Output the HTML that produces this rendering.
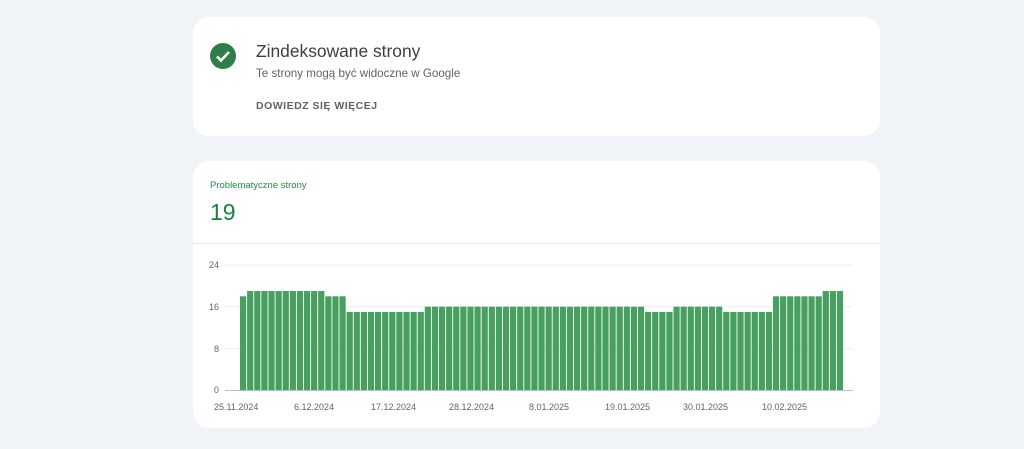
<!DOCTYPE html>
<html><head><style>
body{margin:0;width:1024px;height:449px;background:#f0f3f8;font-family:"Liberation Sans",Arial,sans-serif;position:relative;overflow:hidden}
.card{position:absolute;left:193px;width:687px;background:#fff;border-radius:16px}
</style></head><body>
<div class="card" style="top:17px;height:119px">
<svg style="position:absolute;left:17px;top:26px" width="26" height="26" viewBox="0 0 26 26"><circle cx="13" cy="13" r="13" fill="#2e7d4a"/><path d="M7 13.5l4 4 8-8.5" fill="none" stroke="#fff" stroke-width="2.6"/></svg>
<div style="position:absolute;left:63px;top:24px;font-size:17.4px;color:#3c4043">Zindeksowane strony</div>
<div style="position:absolute;left:63px;top:50px;font-size:11.6px;color:#5f6368">Te strony mogą być widoczne w Google</div>
<div style="position:absolute;left:63px;top:83px;font-size:10.5px;color:#5f6368;font-weight:bold;letter-spacing:.5px">DOWIEDZ SIĘ WIĘCEJ</div>
</div>
<div class="card" style="top:161px;height:267px">
<div style="position:absolute;left:17px;top:19px;font-size:9.5px;color:#1e8e3e">Problematyczne strony</div>
<div style="position:absolute;left:17px;top:38px;font-size:23px;color:#1e7e3e">19</div>
<div style="position:absolute;left:0;right:0;top:82px;border-top:1px solid #e8eaed"></div>
</div>
<svg style="position:absolute;left:0;top:0" width="1024" height="449">
<g font-size="9" fill="#5f6368" font-family="Liberation Sans,Arial,sans-serif">
<text x="219" y="268" text-anchor="end">24</text><text x="219" y="310" text-anchor="end">16</text><text x="219" y="352" text-anchor="end">8</text><text x="219" y="393" text-anchor="end">0</text>
<text x="214" y="410">25.11.2024</text><text x="294" y="410">6.12.2024</text><text x="371" y="410">17.12.2024</text><text x="449" y="410">28.12.2024</text><text x="529" y="410">8.01.2025</text><text x="605" y="410">19.01.2025</text><text x="683" y="410">30.01.2025</text><text x="762" y="410">10.02.2025</text>
</g>
<g stroke="#eceff3" stroke-width="1"><line x1="225" x2="853" y1="265" y2="265"/><line x1="225" x2="853" y1="306.5" y2="306.5"/><line x1="225" x2="853" y1="348.5" y2="348.5"/></g>
<line x1="225" x2="853" y1="390.5" y2="390.5" stroke="#bdc1c6"/>
<g id="b" fill="#47a05f"></g>
</svg>
<script>
var seq=[[18,1],[19,11],[18,3],[15,11],[16,31],[15,4],[16,7],[15,7],[18,7],[19,3]],v=[];
seq.forEach(function(s){for(var i=0;i<s[1];i++)v.push(s[0])});
var g=document.getElementById('b'),p=604/v.length,h='';
v.forEach(function(x,i){var t=390-x*125/24;h+='<rect x="'+(240+i*p).toFixed(2)+'" y="'+t.toFixed(1)+'" width="'+(p-0.9).toFixed(2)+'" height="'+(390-t).toFixed(1)+'"/>'});
g.innerHTML=h;
</script>
</body></html>
